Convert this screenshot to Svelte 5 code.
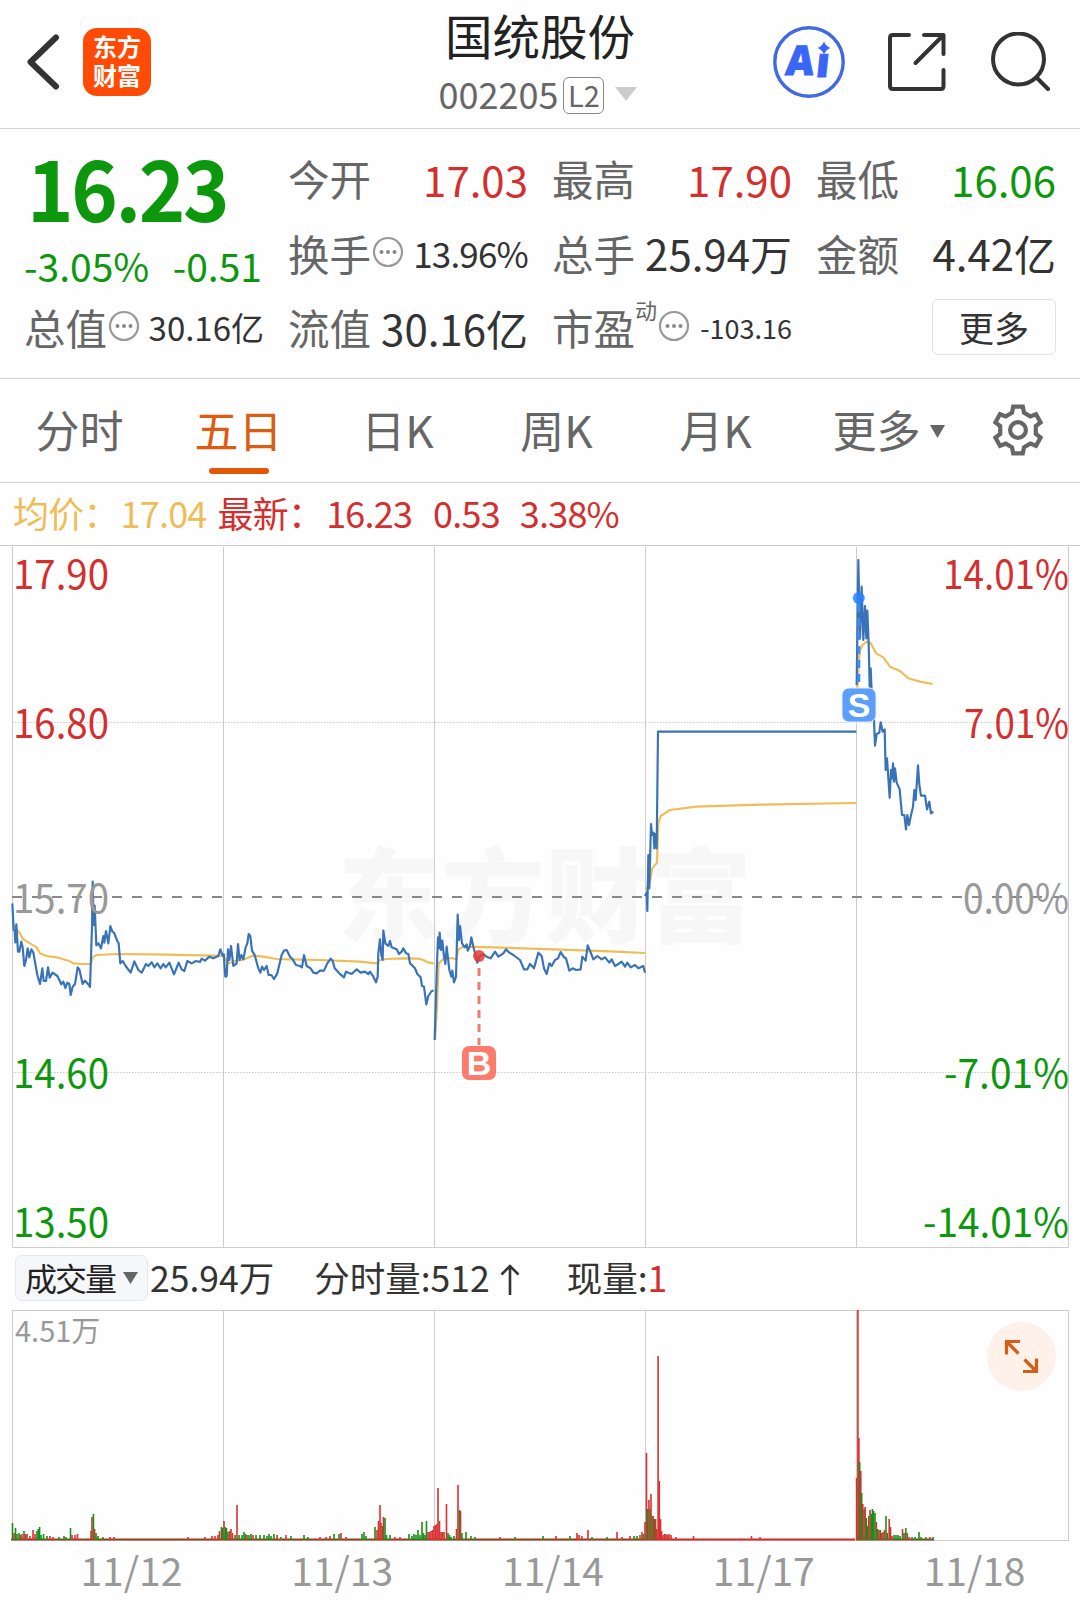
<script>
    const quotes = [
        { label: "今开", value: "17.03", color: "red" },
        { label: "最高", value: "17.90", color: "red" },
        { label: "最低", value: "16.06", color: "green" },
        { label: "换手", value: "13.96%", tip: true, size: "mid" },
        { label: "总手", value: "25.94万" },
        { label: "金额", value: "4.42亿" },
    ];

    const tabs = ["分时", "五日", "日K", "周K", "月K"];
    let activeTab = $state("五日");

    const gridX = [223.5, 434.5, 645.5, 856.5];
    const dates = ["11/12", "11/13", "11/14", "11/17", "11/18"];

    const axis = [
        { y: 588.5, price: "17.90", rate: "14.01%", width: 126, color: "red" },
        { y: 737.5, price: "16.80", rate: "7.01%", width: 105, color: "red" },
        { y: 912.5, price: "15.70", rate: "0.00%", width: 106, color: "gray" },
        { y: 1088, price: "14.60", rate: "-7.01%", width: 125, color: "green" },
        { y: 1236.5, price: "13.50", rate: "-14.01%", width: 146, color: "green" },
    ];

    // 价格线，每段坐标以 1/3 像素为单位，x/y 是该段原点
    const segments = [
        {
            x: 0,
            y: 860,
            avg: "38,190 50,208 58,218 70,238 90,250 110,262 120,280 140,288 175,293 205,302 220,310 245,312 272,312 278,292 290,285 350,282 500,284 640,287 668,287",
            price: "37,130 41,210 44,212 46,247 49,193 54,275 58,275 64,245 68,262 73,318 78,300 83,265 88,292 94,268 100,278 104,300 112,345 120,372 127,325 131,363 138,363 144,322 149,353 158,338 172,348 184,373 190,365 196,384 202,368 208,372 212,405 218,380 225,372 233,322 238,328 248,372 255,362 264,372 270,381 276,200 278,65 281,195 284,137 289,256 295,250 303,265 310,228 313,248 318,213 325,250 331,198 337,215 342,218 352,243 356,250 361,310 368,303 377,318 392,338 403,304 415,330 425,338 438,312 445,318 455,307 463,322 472,310 482,325 490,312 497,322 508,308 522,343 536,308 545,328 553,333 562,303 575,310 588,303 600,306 605,296 615,302 628,290 640,295 655,288 661,268 669,290",
        },
        {
            x: 0,
            y: 860,
            avg: "672,290 685,310 700,305 735,297 758,287 790,290 830,297 870,298 960,300 1080,305 1130,310 1140,300 1160,297 1210,295 1255,296 1270,300 1285,308 1301,310",
            price: "671,280 676,350 680,348 684,268 688,300 693,258 700,318 710,310 714,252 719,300 724,285 730,298 737,262 742,250 746,222 751,228 756,272 764,285 775,325 781,338 786,320 792,330 800,318 806,345 814,345 822,357 832,340 845,285 852,272 860,270 870,290 878,298 888,315 900,318 906,322 912,285 920,318 932,325 940,338 950,340 960,332 972,332 982,310 992,296 998,302 1004,325 1018,340 1032,352 1038,335 1055,342 1070,328 1082,338 1095,335 1105,342 1110,335 1120,350 1128,367 1133,350 1135,280 1140,238 1144,285 1148,300 1150,212 1156,250 1165,258 1170,243 1175,262 1190,268 1197,282 1205,275 1210,265 1218,280 1225,282 1230,310 1245,325 1252,342 1262,352 1266,378 1272,380 1279,433 1285,408 1295,393 1301,392",
        },
        {
            x: 320,
            y: 840,
            avg: "345,600 351,500 356,370 370,357 395,354 409,358 415,328 430,320 520,322 700,328 870,334 975,339",
            price: "344,600 350,400 354,292 357,325 359,278 363,330 367,302 372,350 376,372 380,320 388,390 394,410 397,392 402,427 408,410 411,300 413,224 417,300 420,258 426,310 434,322 440,313 443,332 450,318 454,292 460,320 468,350 472,368 478,350 490,342 500,350 512,355 525,335 535,350 550,340 558,328 568,338 580,345 600,360 612,388 622,388 630,372 642,385 655,338 665,348 672,385 680,402 688,370 695,378 705,360 714,355 722,336 732,352 738,355 748,392 758,385 768,390 782,388 787,350 797,362 803,316 810,332 820,358 832,348 845,358 855,352 868,368 875,358 885,378 895,372 905,365 915,380 922,368 932,382 945,375 955,385 965,380 970,378 975,398",
        },
        {
            x: 620,
            y: 700,
            avg: "78,570 90,545 97,505 111,488 115,370 122,348 150,330 230,320 420,314 709,309",
            price: "75,588 80,578 82,633 85,465 88,565 93,372 96,405 101,398 103,445 106,402 110,445 114,95 709,95",
        },
        {
            x: 820,
            y: 540,
            avg: "112,445 116,380 119,335 127,315 140,305 152,310 168,340 190,352 210,380 240,393 265,415 300,425 338,432",
            price: "110,435 115,60 120,295 125,140 130,300 135,198 139,295 142,212 146,310 149,440 152,385 155,455 160,490 165,617 170,582 178,578 182,547 188,575 194,568 197,690 201,655 209,773 213,690 216,715 219,670 222,725 225,685 230,728 239,748 246,825 253,825 258,868 262,825 267,855 272,830 279,800 283,750 287,780 294,676 298,735 303,767 315,767 321,808 328,785 333,820 340,815",
        },
    ];

    // 成交量柱：x, 高度, r 涨 / g 跌
    const spikes = `12.5,17,g 14,7,r 15.5,12,g 17,6,g 19,7,g 20.5,5,r 22,6,r 24,9,g 25.5,6,r 27,6,r 30,4,r 33,10,r
        35,6,r 37,9,g 38.3,11,g 39.6,13,g 41,5,g 43.5,6,g 47,4,g 50,4,r 53,3,r 59,3,g 64,4,g 66,3,g 70.5,12,g 72,5,r 75,5,r 77.5,6,r
        91,9,r 92,23,r 93.4,26,g 94.6,11,r 96,7,g 98,4,g 103,3,g 110,3,r 114,3,r 188,3,r 205,3,r 212,4,r 215,4,r 218,5,r 219.5,9,r
        221.5,13,g 222.7,12,g 224,19,r 225.3,13,g 226.5,12,g 228,8,g 229.5,9,r 231,11,r 232.5,7,r 235,5,g 237,35,r 239,5,g 242,5,g 244,8,g
        245.5,6,g 247,5,r 249,5,g 251,6,g 253,5,r 256,5,g 260,5,g 264,5,g 267,4,g 269,6,g 271,4,g 274,6,g 277,5,r 281,3,g 286,5,r
        291,4,g 304,5,g 308,3,g 320,3,r 326,3,r 330,4,r 334,6,g 339,6,g 341,7,r 346,3,r 362,6,g 364,8,g 366,4,g 375,13,g 377,10,r
        378.5,19,r 380,35,r 381,17,r 382.5,14,g 383.5,23,r 385,22,g 386.5,5,g 390,5,g 395,3,r 400,3,r 409,6,g 412,4,g 414,6,g
        416,5,g 418,10,g 420,5,g 422,18,g 423.5,7,g 425,5,g 426.5,19,g 428,8,r 429.5,8,r 431,9,r 432.5,10,r 434,14,r 435.5,15,r
        437,16,r 438,52,r 439.5,19,r 441,8,r 442.5,8,r 444,8,r 446.5,36,r 448,7,g 449.5,5,g 451,3,g 454,4,g 456.5,11,r
        458,55,r 459.5,30,g 460.5,29,r 462,7,g 466,8,g 471,4,g 475,3,g 500,3,r 515,3,g 543,4,g 556,4,r 570,4,g 577,7,r 579,5,r 582,4,r 588,10,r
        592,3,g 607,3,g 617,8,r 622,3,r 630,4,r 634,4,g 637,4,g 640,5,r 642,8,r 643.5,6,g 645,18,r 646.5,87,r 647.7,31,g 648.9,40,r
        650,31,g 651,46,r 652,24,g 653.2,24,r 654.4,21,g 655.6,21,r 656.8,11,r 658.1,184,r 659.3,59,r 660.5,21,r 661.6,9,r
        663,5,r 664.5,6,r 666,6,r 667.5,5,r 669,6,r 671,5,r 676,3,r 693.5,4,r 751.5,4,r 760,3,r
        856.6,62,r 857.9,230,r 858.9,102,r 859.7,78,g 860.8,69,r 861.7,47,g 862.8,36,r 864,31,g 865.2,33,r 866.4,22,g 867.6,14,g 868.8,24,r
        870,30,r 871.2,26,g 872.4,31,g 873.6,29,g 875,27,g 876.3,18,r 877.6,11,g 879,10,r 880.3,10,g 881.6,7,r 883,8,r 884.5,10,r
        886,24,g 887.3,7,g 889.2,21,r 890.5,13,r 892,4,r 894,5,g 896,5,g 898,5,g 900,4,g 902.5,11,r 904,7,g 905.8,12,g 907.2,7,r
        909,3,r 912,3,g 915,3,g 919,8,g 921,3,g 926,3,g 930,3,r 933,3,g`;
    const bars = spikes
        .trim()
        .split(/\s+/)
        .map((s) => s.split(","));
</script>

{#snippet tip()}
    <svg class="tip" viewBox="0 0 32 32">
        <circle cx="16" cy="16" r="14" fill="none" stroke="#999" stroke-width="2.2" />
        <circle cx="9.5" cy="16" r="2" fill="#888" />
        <circle cx="16" cy="16" r="2" fill="#888" />
        <circle cx="22.5" cy="16" r="2" fill="#888" />
    </svg>
{/snippet}

<div class="page">
    <header>
        <div class="left">
            <svg class="back" viewBox="0 0 34 56">
                <path d="M30 3.5 L4.5 28 L30 52.5" fill="none" stroke="#333" stroke-width="6" stroke-linecap="round" stroke-linejoin="round" />
            </svg>
            <div class="logo"><span>东方</span><span>财富</span></div>
        </div>
        <div class="title">
            <h1>国统股份</h1>
            <div class="code">
                <span>002205</span><span class="level">L2</span>
                <svg width="22" height="14" viewBox="0 0 22 14"><path d="M0 0H22L11 14Z" fill="#ccc" /></svg>
            </div>
        </div>
        <div class="actions">
            <svg width="74" height="74" viewBox="0 0 74 74">
                <circle cx="37" cy="37" r="34.2" fill="none" stroke="#4169e1" stroke-width="3.4" />
                <g class="ai" transform="translate(5 0) skewX(-6)">
                    <text x="13" y="50" textLength="28" lengthAdjust="spacingAndGlyphs">A</text>
                    <text x="43.5" y="52">ı</text>
                </g>
                <path d="M52 16.5 Q53.8 21.2 58.5 23 Q53.8 24.8 52 29.5 Q50.2 24.8 45.5 23 Q50.2 21.2 52 16.5Z" fill="#3a66f6" />
            </svg>
            <svg width="60" height="60" viewBox="0 0 60 60" fill="none" stroke="#333" stroke-width="4" stroke-linecap="round" stroke-linejoin="round">
                <path d="M22 3H6Q3 3 3 6V54Q3 57 6 57H54Q56.5 57 56.5 54V38" />
                <path d="M37 3H56.5V22M55 4.5L28.5 31" />
            </svg>
            <svg width="60" height="60" viewBox="0 0 60 60" fill="none" stroke="#333" stroke-width="4" stroke-linecap="round">
                <circle cx="28.5" cy="27" r="25.5" />
                <path d="M47 46L58 57" />
            </svg>
        </div>
    </header>

    <section class="quote">
        <div class="main green">
            <strong>16.23</strong>
            <p><span>-3.05%</span><span>-0.51</span></p>
        </div>
        {#each quotes as q}
            <div class="item">
                <span class="label">{q.label}</span>
                {#if q.tip}{@render tip()}{/if}
                <span class="value {q.color} {q.size}">{q.value}</span>
            </div>
        {/each}
        <div class="item">
            <span class="label">总值</span>{@render tip()}
            <span class="value small">30.16亿</span>
        </div>
        <div class="item">
            <span class="label">流值</span>
            <span class="value">30.16亿</span>
        </div>
        <div class="item">
            <span class="label">市盈</span><span class="dyn">动</span>{@render tip()}
            <span class="value tiny">-103.16</span>
        </div>
        <div class="item end"><button class="more">更多</button></div>
    </section>

    <nav>
        {#each tabs as tab}
            <button class="tab" class:active={tab === activeTab} onclick={() => (activeTab = tab)}>{tab}</button>
        {/each}
        <button class="tab wide">
            更多<svg width="15" height="13" viewBox="0 0 15 13"><path d="M0 0H15L7.5 13Z" fill="#666" /></svg>
        </button>
        <svg class="gear" viewBox="-27 -27 54 54" fill="none" stroke="#666" stroke-width="4.2">
            <path d="M-4.8 -23.3H4.8L6 -17.3L12.3 -13.6L18 -15.8L22.6 -7.6L17.8 -3.9V3.9L22.6 7.6L18 15.8L12.3 13.6L6 17.3L4.8 23.3H-4.8L-6 17.3L-12.3 13.6L-18 15.8L-22.6 7.6L-17.8 3.9V-3.9L-22.6 -7.6L-18 -15.8L-12.3 -13.6L-6 -17.3Z" />
            <circle r="7.9" />
        </svg>
    </nav>

    <div class="legend">
        <span class="avg">均价：</span><span class="avg n1">17.04</span>
        <span class="red">最新：</span><span class="red n2">16.23</span>
        <span class="red n3">0.53</span><span class="red">3.38%</span>
    </div>

    <svg class="chart" width="1080" height="703" viewBox="0 545 1080 703">
        <text class="watermark" x="338" y="935" textLength="414">东方财富</text>
        <g stroke="#ccc" fill="none">
            <path d="M0 545.5H1080M12.5 545V1247.5H1068.5V545" />
            {#each gridX as x}<path d="M{x} 547V1247" />{/each}
            <path d="M12 722.5H1068M12 1072.5H1068" stroke-dasharray="1.5 1.5" />
        </g>
        <path d="M12 897H1068" stroke="#888" stroke-width="2" stroke-dasharray="10 10" />
        {#each segments as s}
            <g class="line" transform="translate({s.x} {s.y}) scale(0.33333)">
                <polyline points={s.avg} stroke="#efbd58" />
                <polyline points={s.price} stroke="#3873b8" />
            </g>
        {/each}
        {#each axis as a}
            <text class="axis {a.color}" x="13" y={a.y} textLength="96" lengthAdjust="spacingAndGlyphs">{a.price}</text>
            <text class="axis {a.color}" x="1069" y={a.y} text-anchor="end" textLength={a.width} lengthAdjust="spacingAndGlyphs">{a.rate}</text>
        {/each}

        <circle cx="479" cy="956" r="6" fill="#e83a35" opacity=".85" />
        <path d="M479 962V1045" stroke="#f07c70" stroke-width="3" stroke-dasharray="8 6" stroke-dashoffset="-6" />
        <rect x="462" y="1046" width="34" height="34" rx="7" fill="#fb7b6c" />
        <text class="mark" x="479" y="1075">B</text>

        <circle cx="858.8" cy="598" r="6" fill="#2a82ff" opacity=".85" />
        <path d="M858.8 604V688" stroke="#3f8bf5" stroke-width="3" stroke-dasharray="8 6" />
        <rect x="842" y="688" width="34" height="34" rx="7" fill="#5c9ffb" stroke="#e4efff" />
        <text class="mark" x="859" y="717">S</text>
    </svg>

    <div class="volume-bar">
        <button class="picker">
            <span>成交量</span><svg width="15" height="12" viewBox="0 0 15 12"><path d="M0 0H15L7.5 12Z" fill="#666" /></svg>
        </button>
        <span class="total">25.94万</span>
        <span class="minute">分时量:512<svg width="20" height="32" viewBox="0 0 20 32"><path d="M10 31V2M1.5 10.5L10 2L18.5 10.5" fill="none" stroke="#333" stroke-width="2.6" /></svg></span>
        <span class="now">现量:<span class="red">1</span></span>
    </div>

    <svg class="volume" width="1080" height="232" viewBox="0 1310 1080 232">
        <g stroke="#ccc" fill="none">
            <path d="M12.5 1310.5H1068.5V1540.5H12.5Z" />
            {#each gridX as x}<path d="M{x} 1310V1540" />{/each}
        </g>
        <text class="max" x="15" y="1342">4.51万</text>
        <path d="M11 1539.5H645" stroke="#97401c" stroke-width="2" />
        <path d="M645 1539.5H855" stroke="#d42a2a" stroke-width="2" />
        <path d="M856 1539.5H934" stroke="#8b4a1b" stroke-width="2" />
        {#each bars as [x, h, c]}
            <rect x={x - 0.8} y={1540 - h} width="1.6" height={h} fill={c === "r" ? "#d93030" : "#188f18"} />
        {/each}
        <circle cx="1021.5" cy="1356.5" r="34.5" fill="#fef1ea" />
        <path d="M1020 1341.5H1006.5V1354.5M1007 1342L1018.5 1353.5M1023 1371.5H1036.5V1358.5M1036 1371L1024.5 1359.5" fill="none" stroke="#d65d17" stroke-width="3.2" />
    </svg>

    <footer>
        {#each dates as d}<span>{d}</span>{/each}
    </footer>
</div>

<style>
    :global(body) {
        background: #fefefe;
    }

    .page {
        width: 1080px;
        height: 1600px;
        overflow: hidden;
        font-family: "Noto Sans CJK SC", "Noto Sans", sans-serif;
        color: #333;
        background: #fefefe;
    }

    button {
        font-family: inherit;
        border: none;
        background: none;
        padding: 0;
        color: inherit;
    }

    .red {
        color: #d32f2f;
        fill: #d32f2f;
    }
    .green {
        color: #0d970d;
        fill: #0d970d;
    }
    .gray {
        fill: #999;
    }

    header {
        height: 128px;
        border-bottom: 1px solid #d4d4d4;
        display: grid;
        grid-template-columns: 400px 280px 400px;
    }

    .left {
        display: flex;
        align-items: center;
        padding: 0 0 5px 26px;
    }
    .back {
        width: 34px;
        height: 56px;
        margin-right: 23px;
    }
    .logo {
        width: 68px;
        height: 68px;
        border-radius: 14px;
        background: #ff4b05;
        color: #fff;
        display: flex;
        flex-direction: column;
        align-items: center;
        justify-content: center;
        padding-bottom: 3px;
        box-sizing: border-box;
        font-size: 24px;
        font-weight: 700;
        line-height: 29px;
    }

    .title {
        display: flex;
        flex-direction: column;
        align-items: center;
    }
    h1 {
        margin: 2px 0 0;
        font-size: 47.5px;
        font-weight: 400;
        line-height: 65px;
        color: #222;
    }
    .code {
        display: flex;
        align-items: center;
        height: 54px;
        font-size: 36px;
        line-height: 50px;
        color: #666;
        margin-left: -4px;
    }
    .code > span:first-child {
        padding-bottom: 2px;
    }
    .level {
        box-sizing: border-box;
        width: 41px;
        height: 37px;
        margin: 2px 11px 0 5px;
        border: 1px solid #888;
        border-radius: 6px;
        font-size: 29px;
        line-height: 32px;
        text-align: center;
    }

    .actions {
        display: flex;
        align-items: center;
        justify-content: flex-end;
        padding: 0 30px 5px 0;
    }
    .actions svg + svg {
        margin-left: 41px;
    }
    .actions svg + svg + svg {
        margin-left: 43px;
    }
    .ai text {
        font: 800 41px "Open Sans", sans-serif;
        fill: #3a66f6;
        stroke: #3a66f6;
        stroke-width: 1;
    }

    .quote {
        box-sizing: border-box;
        height: 250px;
        border-bottom: 1px solid #d4d4d4;
        padding: 12px 24px 0;
        display: grid;
        grid-template-columns: repeat(4, 240px);
        grid-template-rows: repeat(3, 74.5px);
        column-gap: 24px;
    }
    .main {
        grid-row: span 2;
    }
    .main strong {
        display: block;
        font-size: 84px;
        line-height: 90px;
        font-weight: 700;
        letter-spacing: -2.5px;
        margin-left: 3px;
        transform: scaleX(0.94);
        transform-origin: left;
    }
    .main p {
        display: flex;
        justify-content: space-between;
        margin: 5px 0 0;
        padding-right: 2px;
        font-size: 39px;
        line-height: 58px;
    }
    .item {
        display: flex;
        align-items: center;
        white-space: nowrap;
    }
    .item.end {
        justify-content: flex-end;
    }
    .label {
        font-size: 41.5px;
        color: #666;
    }
    .value {
        margin-left: auto;
        font-size: 42px;
    }
    .value.mid {
        font-size: 35px;
        letter-spacing: -0.8px;
    }
    .value.small {
        font-size: 33px;
    }
    .value.tiny {
        font-size: 27px;
    }
    .dyn {
        font-size: 22px;
        color: #666;
        align-self: flex-start;
        margin-top: 5px;
        line-height: 28px;
    }
    .tip {
        width: 32px;
        height: 32px;
        margin: 0 0 2px 1px;
    }
    .more {
        width: 124px;
        height: 56px;
        border: 1px solid #e2e2e2;
        border-radius: 6px;
        font-size: 35px;
        line-height: 50px;
    }

    nav {
        height: 103px;
        border-bottom: 1px solid #d4d4d4;
        display: flex;
        align-items: center;
        color: #666;
    }
    .tab {
        position: relative;
        width: 159px;
        height: 103px;
        padding-bottom: 2px;
        font-size: 44px;
        line-height: 99px;
    }
    .tab.active {
        color: #dc5c14;
    }
    .tab.active::after {
        content: "";
        position: absolute;
        left: 50px;
        bottom: 8px;
        width: 60px;
        height: 6px;
        border-radius: 3px;
        background: #e35604;
    }
    .tab.wide {
        width: 187px;
    }
    .tab.wide svg {
        margin-left: 9px;
        vertical-align: 10px;
    }
    .gear {
        width: 54px;
        height: 54px;
        margin-left: 9px;
        margin-bottom: 1px;
    }

    .legend {
        display: flex;
        align-items: center;
        box-sizing: border-box;
        height: 62px;
        padding: 0 0 4px 13px;
        font-size: 36px;
        line-height: 55px;
        letter-spacing: -0.8px;
        white-space: nowrap;
    }
    .avg {
        color: #efbd58;
    }
    .n1 {
        margin: 0 11px 0 2px;
    }
    .n2 {
        margin: 0 21px 0 3px;
    }
    .n3 {
        margin-right: 20px;
    }

    .chart,
    .volume {
        display: block;
        overflow: visible;
    }
    .watermark {
        font-size: 103px;
        font-weight: 900;
        fill: #f7f7f7;
    }
    .line polyline {
        fill: none;
        stroke-width: 6.5;
        stroke-linejoin: round;
    }
    .axis {
        font-size: 40px;
    }
    .mark {
        font: 700 34px "Liberation Sans", sans-serif;
        fill: #fff;
        text-anchor: middle;
    }

    .volume-bar {
        box-sizing: border-box;
        display: flex;
        align-items: center;
        height: 62px;
        padding: 0 0 2px 15px;
        font-size: 35.5px;
        line-height: 50px;
        white-space: nowrap;
    }
    .picker {
        box-sizing: border-box;
        width: 133px;
        height: 46px;
        display: flex;
        align-items: center;
        padding-left: 9px;
        border: 1px solid #e6e7ea;
        border-radius: 7px;
        background: #f6f7fb;
        font-size: 32px;
        color: #222;
    }
    .picker span {
        letter-spacing: -2px;
        margin: -3px 8px 0 0;
    }
    .total {
        margin: -2px 40px 0 2px;
    }
    .minute {
        margin: -2px 47px 0 0;
    }
    .minute svg {
        margin-left: 10px;
        vertical-align: -4px;
    }
    .now {
        margin-top: -2px;
    }
    .max {
        font-size: 29px;
        fill: #999;
    }

    footer {
        display: flex;
        padding-left: 26px;
        font-size: 39px;
        line-height: 54px;
        color: #999;
    }
    footer span {
        width: 211px;
        text-align: center;
    }
</style>
